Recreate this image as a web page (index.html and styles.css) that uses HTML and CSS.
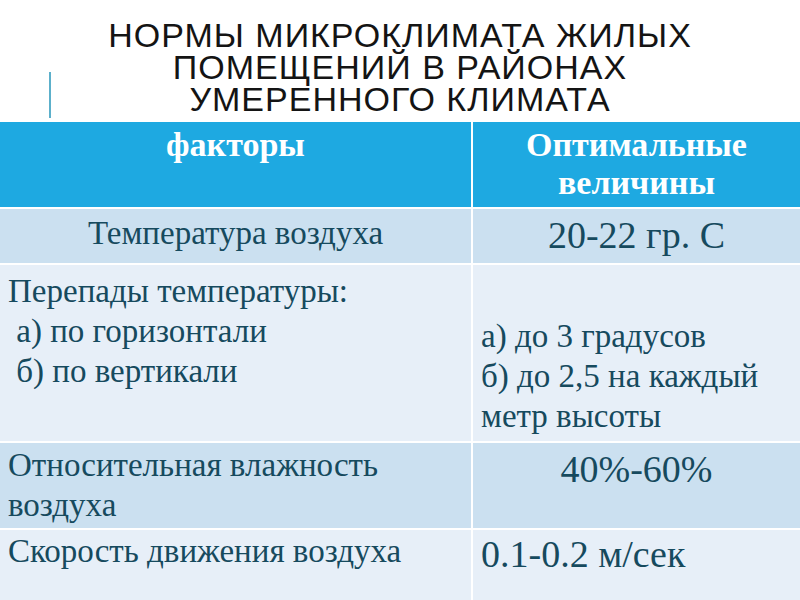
FILE: index.html
```html
<!DOCTYPE html>
<html lang="ru">
<head>
<meta charset="utf-8">
<title>Нормы микроклимата</title>
<link rel="stylesheet" href="styles.css">
</head>
<body>
<div class="slide">
  <div class="accent"></div>
  <h1 class="title"><span class="tl">НОРМЫ МИКРОКЛИМАТА ЖИЛЫХ</span><span class="tl">ПОМЕЩЕНИЙ В РАЙОНАХ</span><span class="tl">УМЕРЕННОГО КЛИМАТА</span></h1>
  <div class="grid">
    <div class="cell head c1">факторы</div>
    <div class="cell head c2">Оптимальные<br>величины</div>

    <div class="cell odd center p5">Температура воздуха</div>
    <div class="cell odd center big p6">20-22 гр. С</div>

    <div class="cell even p7">Перепады температуры:<br>&nbsp;а) по горизонтали<br>&nbsp;б) по вертикали</div>
    <div class="cell even p52">а) до 3 градусов<br>б) до 2,5 на каждый<br>метр высоты</div>

    <div class="cell odd p3">Относительная влажность<br>воздуха</div>
    <div class="cell odd center big p6">40%-60%</div>

    <div class="cell even p2">Скорость движения воздуха</div>
    <div class="cell even big p5">0.1-0.2 м/сек</div>
  </div>
</div>
</body>
</html>
```

FILE: styles.css
```css
html, body {
  margin: 0;
  padding: 0;
  background: #ffffff;
}
.slide {
  position: relative;
  width: 800px;
  height: 600px;
  overflow: hidden;
}
.accent {
  position: absolute;
  left: 49px;
  top: 72px;
  width: 2px;
  height: 46px;
  background: #5cb0cb;
}
.title {
  margin: 0;
  padding-top: 19px;
  height: 103px;
  box-sizing: content-box;
  text-align: center;
  font-family: "Liberation Sans", Arial, sans-serif;
  font-weight: normal;
  font-size: 34px;
  line-height: 32px;
  letter-spacing: 1px;
  color: #141414;
}
.tl {
  display: block;
  height: 32px;
}
.grid {
  display: grid;
  grid-template-columns: 471px 1fr;
  grid-template-rows: 85px 54px 176px 85px 80px;
  gap: 2px;
  background: #ffffff;
}
.cell {
  font-family: "Liberation Serif", "Times New Roman", serif;
  font-size: 33px;
  line-height: 40px;
  color: #164a5e;
  padding-left: 8px;
  box-sizing: border-box;
}
.head {
  background: #1ea9e1;
  color: #ffffff;
  font-weight: bold;
  font-size: 34px;
  text-align: center;
  line-height: 38px;
  padding-top: 4px;
  padding-left: 0;
}
.odd { background: #cbe0f0; }
.even { background: #e7eff8; }
.center { text-align: center; padding-left: 0; }
.big { font-size: 38px; }
.p2 { padding-top: 1px; }
.p3 { padding-top: 2px; }
.p5 { padding-top: 4px; }
.p6 { padding-top: 6px; }
.p7 { padding-top: 6px; }
.p52 { padding-top: 51px; }
```
